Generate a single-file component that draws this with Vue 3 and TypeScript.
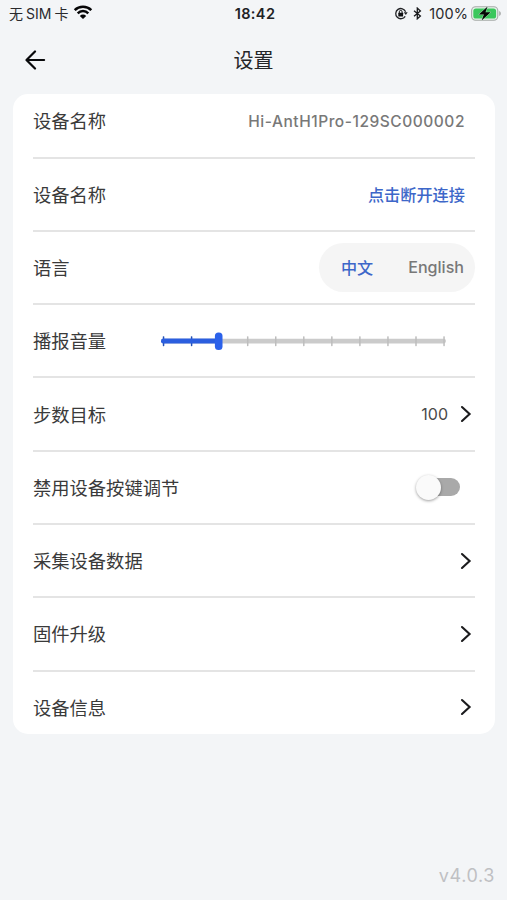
<script setup lang="ts">
import { ref } from 'vue'

interface Row {
  label: string
  kind: 'name' | 'action' | 'language' | 'volume' | 'link' | 'toggle'
  value?: string
}

const rows: Row[] = [
  { label: '设备名称', kind: 'name', value: 'Hi-AntH1Pro-129SC000002' },
  { label: '设备名称', kind: 'action', value: '点击断开连接' },
  { label: '语言', kind: 'language' },
  { label: '播报音量', kind: 'volume' },
  { label: '步数目标', kind: 'link', value: '100' },
  { label: '禁用设备按键调节', kind: 'toggle' },
  { label: '采集设备数据', kind: 'link' },
  { label: '固件升级', kind: 'link' },
  { label: '设备信息', kind: 'link' },
]

const language = ref<'zh' | 'en'>('zh')
const volume = ref(2)
const disabled = ref(false)
const step = 28.05
const ticks = Array.from({ length: 11 }, (_, i) => i)
</script>

<template>
  <main class="screen">
    <div class="status">
      <div class="status-left">
        <span class="carrier"><span>无</span><span class="sim">SIM</span><span>卡</span></span>
        <svg class="wifi" width="20" height="15" viewBox="0 0 20 15">
          <path d="M1.7 5.1a11.8 11.8 0 0 1 16.6 0M4.7 8.3a7.5 7.5 0 0 1 10.6 0" fill="none" stroke="#050506" stroke-width="2.5" />
          <path d="M10 14L6.8 10.9a4.6 4.6 0 0 1 6.4 0z" fill="#050506" />
        </svg>
      </div>
      <span class="time">18:42</span>
      <div class="status-right">
        <svg class="lock" width="14" height="13" viewBox="0 0 14 13">
          <path d="M11.2 9.3A5.1 5.1 0 1 1 11.6 4.8" fill="none" stroke="#222326" stroke-width="1.3" />
          <path d="M9.8 5.3h3.9l-1.9 2.8z" fill="#222326" />
          <rect x="4.3" y="5.8" width="4.8" height="3.7" rx=".5" fill="#111214" />
          <path d="M5.3 6V4.8a1.4 1.4 0 0 1 2.8 0V6" fill="none" stroke="#111214" />
        </svg>
        <svg class="bluetooth" width="9" height="13" viewBox="0 0 9 13">
          <path d="M1 3.7L7.4 9 4.3 11.8V1.1L7.4 3.9 1 9.2" fill="none" stroke="#18191b" stroke-width="1.3" />
        </svg>
        <span class="percent">100%</span>
        <svg class="battery" width="31" height="15" viewBox="0 0 31 15">
          <rect x=".6" y=".8" width="26.2" height="13.4" rx="4" fill="#e5f3e9" stroke="#a6aaa8" stroke-width="1.1" />
          <rect x="2.3" y="2.4" width="22.8" height="10.2" rx="2.6" fill="#3ac75c" />
          <path d="M28.2 5v5c2.2-1 2.2-4 0-5z" fill="#a6aaa8" />
          <path d="M16.6 .6L7.8 8.4h5.1L10.6 14.4l9.1-8.1h-5.2z" fill="#050806" stroke="#d9f4df" stroke-width=".7" paint-order="stroke" />
        </svg>
      </div>
    </div>

    <header class="header">
      <button class="back" type="button">
        <svg width="22" height="20" viewBox="0 0 22 20">
          <path d="M11 1.5L2.5 10l8.5 8.5M2.9 10h17.2" fill="none" stroke="#08090b" stroke-width="2.2" stroke-linecap="round" stroke-linejoin="round" />
        </svg>
      </button>
      <h1>设置</h1>
    </header>

    <section class="card">
      <div v-for="(row, i) in rows" :key="i" class="row">
        <span class="label">{{ row.label }}</span>

        <span v-if="row.kind === 'name'" class="device">{{ row.value }}</span>

        <span v-else-if="row.kind === 'action'" class="disconnect">{{ row.value }}</span>

        <div v-else-if="row.kind === 'language'" class="languages">
          <span class="option zh" :class="{ active: language === 'zh' }" @click="language = 'zh'">中文</span>
          <span class="option en" :class="{ active: language === 'en' }" @click="language = 'en'">English</span>
        </div>

        <svg v-else-if="row.kind === 'volume'" class="slider" width="288" height="20" viewBox="0 0 288 20">
          <rect x="1" y="7.7" width="285" height="4.8" rx="2.4" fill="#cbcbcb" />
          <rect v-for="t in ticks" :key="t" :x="2.8 + t * step" y="5.2" width="1.5" height="10" rx=".6" :fill="t < volume ? '#2350b4' : '#bdbdbd'" />
          <rect x="1" y="7.6" :width="2.5 + volume * step" height="5" rx="2.3" fill="#2b5edf" />
          <rect :x="-1.2 + volume * step" y="1.5" width="7.6" height="17.6" rx="3.6" fill="#2b61ea" @click="volume = 2" />
        </svg>

        <span v-else-if="row.kind === 'toggle'" class="toggle" :class="{ on: disabled }" @click="disabled = !disabled">
          <span class="knob"></span>
        </span>

        <div v-else class="link">
          <span v-if="row.value" class="goal">{{ row.value }}</span>
          <svg width="12" height="18" viewBox="0 0 12 18">
            <path d="M2 2l7.6 7L2 16" fill="none" stroke="#1b1b1d" stroke-width="2.1" stroke-linecap="round" stroke-linejoin="miter" />
          </svg>
        </div>
      </div>
    </section>

    <footer class="version">v4.0.3</footer>
  </main>
</template>

<style>
body {
  background: #f3f5f7;
}
</style>

<style scoped>
.screen {
  display: flex;
  flex-direction: column;
  box-sizing: border-box;
  width: 507px;
  height: 900px;
  overflow: hidden;
  background: #f3f5f7;
  color: #3a3a3a;
  font-family: Inter, "Noto Sans CJK SC", sans-serif;
}

.status {
  display: grid;
  grid-template-columns: 1fr auto 1fr;
  align-items: center;
  height: 27px;
  padding: 0 6px 0 9px;
  color: #29292c;
  font-size: 14.5px;
  line-height: 20px;
}

.status-left,
.status-right {
  display: flex;
  align-items: center;
}

.carrier {
  display: flex;
  gap: 3px;
  margin-right: 5px;
  font-size: 14px;
}

.wifi {
  margin-bottom: 2px;
}

.time {
  color: #202124;
  font-size: 14.5px;
  font-weight: 600;
  letter-spacing: 0.4px;
}

.status-right {
  justify-content: flex-end;
  margin-right: -1px;
}

.bluetooth {
  margin: 0 7px 0 5px;
}

.percent {
  margin-right: 3px;
  letter-spacing: 0.1px;
}

.header {
  display: grid;
  grid-template-columns: 80px 1fr 80px;
  align-items: center;
  height: 67px;
  box-sizing: border-box;
  padding-bottom: 2px;
}

.back {
  display: flex;
  margin: 0 0 0 24px;
  padding: 0;
  border: 0;
  background: none;
}

h1 {
  margin: 0;
  padding-top: 2px;
  color: #242528;
  font-size: 20px;
  font-weight: 400;
  line-height: 28px;
  text-align: center;
}

.card {
  flex: none;
  box-sizing: border-box;
  width: 482px;
  height: 640px;
  margin-left: 13px;
  padding: 0 20px;
  border-radius: 15px;
  background: #fff;
}

.row {
  display: flex;
  align-items: center;
  justify-content: space-between;
  box-sizing: border-box;
  height: 73.3px;
  border-bottom: 2px solid #e4e4e4;
}

.row:first-child {
  margin-top: -8.8px;
}

.row:last-child {
  border-bottom-color: transparent;
}

.label {
  padding-top: 1px;
  font-size: 18.3px;
  line-height: 26px;
}

.device {
  margin-right: 10px;
  padding-top: 1px;
  color: #787878;
  font-size: 15.5px;
  font-weight: 500;
  letter-spacing: 0.53px;
}

.disconnect {
  margin-right: 10px;
  color: #3d67c9;
  font-size: 16.2px;
  font-weight: 500;
}

.languages {
  display: flex;
  align-items: center;
  justify-content: space-between;
  box-sizing: border-box;
  width: 156px;
  height: 49px;
  padding: 0 11px 0 22px;
  border-radius: 25px;
  background: #f5f5f5;
  color: #787878;
  font-size: 16.1px;
  font-weight: 500;
}

.option.active {
  color: #3d67c9;
}

.slider {
  margin-right: 27px;
}

.link {
  display: flex;
  align-items: center;
  gap: 11px;
  margin-right: 3px;
}

.goal {
  margin-right: 1px;
  color: #4a4a4a;
  font-size: 16px;
}

.toggle {
  display: flex;
  align-items: center;
  box-sizing: border-box;
  width: 42px;
  height: 18px;
  margin-right: 15px;
  border-radius: 9px;
  background: #a9a9a9;
}

.toggle.on {
  justify-content: flex-end;
  background: #2b61ea;
}

.knob {
  width: 25px;
  height: 25px;
  margin-left: -2px;
  border-radius: 50%;
  background: #fafafa;
  box-shadow: 0 1px 3px rgba(0, 0, 0, 0.38);
}

.version {
  margin-top: auto;
  padding: 0 12px 12px 0;
  color: #bfc0c3;
  font-size: 18px;
  line-height: 24px;
  letter-spacing: 0.6px;
  text-align: right;
}
</style>
